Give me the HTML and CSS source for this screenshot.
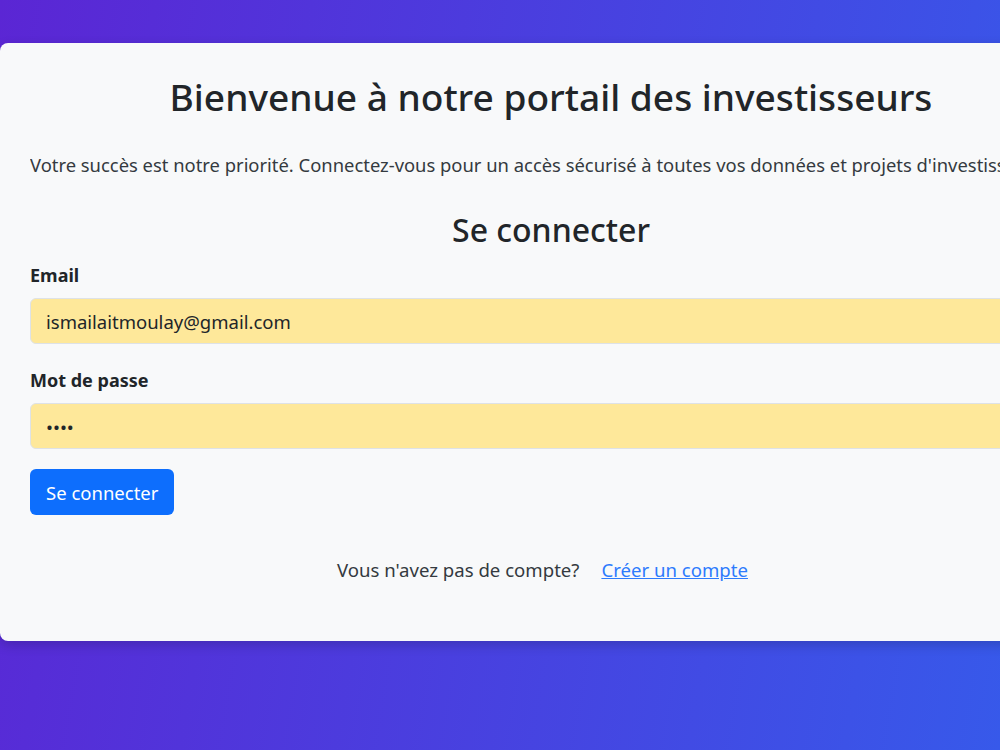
FILE: index.html
```html
<!DOCTYPE html>
<html lang="fr">
<head>
  <meta charset="UTF-8" />
  <meta name="viewport" content="width=device-width, initial-scale=1.0" />
  <title>Portail des investisseurs</title>
  <link rel="stylesheet" href="styles.css">
</head>
<body>
  <div class="card">
    <h1>Bienvenue à notre portail des investisseurs</h1>
    <p class="intro">Votre succès est notre priorité. Connectez-vous pour un accès sécurisé à toutes vos données et projets d'investissement.</p>

    <h2>Se connecter</h2>
    <form class="login" onsubmit="return false;">
      <label for="email">Email</label>
      <input type="email" id="email" class="field" value="ismailaitmoulay@gmail.com" />

      <label for="password">Mot de passe</label>
      <input type="password" id="password" class="field" value="1234" />

      <button type="submit" class="btn-primary">Se connecter</button>
    </form>

    <div class="signup">
      <span>Vous n'avez pas de compte?</span>
      <a href="#">Créer un compte</a>
    </div>
  </div>
</body>
</html>
```

FILE: styles.css
```css
html, body {
  height: 100%;
}

body {
  margin: 0;
  overflow: hidden;
  font-family: 'Noto Sans', sans-serif;
  color: #212529;
  background: linear-gradient(100deg, #5b26d4 0%, #3759ea 100%);
}

.card {
  box-sizing: border-box;
  width: 1102px;
  height: 598px;
  margin-top: 43px;
  padding: 30px;
  background: #f8f9fa;
  border-radius: 8px;
  box-shadow: 0 4px 12px rgba(0, 0, 0, 0.18);
}

h1 {
  margin: 0;
  font-size: 37.1px;
  font-weight: 500;
  line-height: 48px;
  text-align: center;
}

.intro {
  margin: 30px 0 0;
  font-size: 18.4px;
  line-height: 27px;
  white-space: nowrap;
  overflow: hidden;
  color: #343a40;
}

h2 {
  margin: 33px 0 0;
  font-size: 32px;
  font-weight: 500;
  line-height: 38px;
  text-align: center;
}

.login label {
  display: block;
  margin: 15px 0 12px;
  font-size: 18px;
  font-weight: 700;
  line-height: 22px;
}

.field {
  display: block;
  box-sizing: border-box;
  width: 100%;
  height: 46px;
  padding: 0 15px;
  font-family: inherit;
  font-size: 18.5px;
  color: #212529;
  background: #fee89a;
  border: 1px solid #dee2e6;
  border-radius: 6px;
}

.field + label {
  margin-top: 25px;
}

.btn-primary {
  margin-top: 20px;
  height: 46px;
  padding: 0 16px;
  font-family: inherit;
  font-size: 18.5px;
  color: #fff;
  background: #0d6efd;
  border: none;
  border-radius: 6px;
  cursor: pointer;
}

.signup {
  margin-top: 41px;
  padding-right: 17px;
  display: flex;
  justify-content: center;
  gap: 22px;
  font-size: 18.6px;
  line-height: 27px;
  color: #343a40;
}

.signup a {
  color: #2d7bfd;
}
```
